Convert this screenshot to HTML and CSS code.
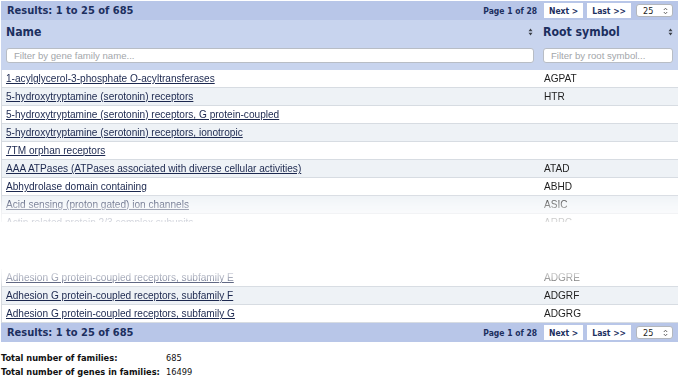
FILE: index.html
```html
<!DOCTYPE html>
<html>
<head>
<meta charset="utf-8">
<link rel="stylesheet" href="styles.css">
</head>
<body>
<div class="wrap">
  <div class="bar">
    <span class="results">Results: 1 to 25 of 685</span>
    <div class="pager">
      <span class="pageinfo">Page 1 of 28</span>
      <span class="btn">Next &gt;</span>
      <span class="btn">Last &gt;&gt;</span>
      <span class="select">25<svg class="updown" width="5" height="8" viewBox="0 0 5 8"><path d="M0.8 3 L2.5 1.2 L4.2 3 M0.8 5 L2.5 6.8 L4.2 5" fill="none" stroke="#555" stroke-width="0.9"/></svg></span>
    </div>
  </div>
  <div class="grid head">
    <div class="th">Name<svg class="sort" width="5" height="8" viewBox="0 0 5 8"><path d="M0.5 3.2 L2.5 0.6 L4.5 3.2 Z M0.5 4.8 L2.5 7.4 L4.5 4.8 Z" fill="#3a3f48"/></svg></div>
    <div class="th">Root symbol<svg class="sort" width="5" height="8" viewBox="0 0 5 8"><path d="M0.5 3.2 L2.5 0.6 L4.5 3.2 Z M0.5 4.8 L2.5 7.4 L4.5 4.8 Z" fill="#3a3f48"/></svg></div>
  </div>
  <div class="grid filters">
    <div class="fcell fname"><input class="filter" placeholder="Filter by gene family name..."></div>
    <div class="fcell fsym"><input class="filter" placeholder="Filter by root symbol..."></div>
  </div>
  <div class="rows rows-top">
    <div class="grid row"><div class="cell"><a href="#">1-acylglycerol-3-phosphate O-acyltransferases</a></div><div class="cell sym">AGPAT</div></div>
    <div class="grid row"><div class="cell"><a href="#">5-hydroxytryptamine (serotonin) receptors</a></div><div class="cell sym">HTR</div></div>
    <div class="grid row"><div class="cell"><a href="#">5-hydroxytryptamine (serotonin) receptors, G protein-coupled</a></div><div class="cell sym"></div></div>
    <div class="grid row"><div class="cell"><a href="#">5-hydroxytryptamine (serotonin) receptors, ionotropic</a></div><div class="cell sym"></div></div>
    <div class="grid row"><div class="cell"><a href="#">7TM orphan receptors</a></div><div class="cell sym"></div></div>
    <div class="grid row"><div class="cell"><a href="#">AAA ATPases (ATPases associated with diverse cellular activities)</a></div><div class="cell sym">ATAD</div></div>
    <div class="grid row"><div class="cell"><a href="#">Abhydrolase domain containing</a></div><div class="cell sym">ABHD</div></div>
    <div class="grid row"><div class="cell"><a href="#">Acid sensing (proton gated) ion channels</a></div><div class="cell sym">ASIC</div></div>
    <div class="grid row"><div class="cell"><a href="#">Actin related protein 2/3 complex subunits</a></div><div class="cell sym">ARPC</div></div>
  </div>
  <div class="gap"></div>
  <div class="rows rows-bottom">
    <div class="grid row"><div class="cell"><a href="#">Adhesion G protein-coupled receptors, subfamily E</a></div><div class="cell sym">ADGRE</div></div>
    <div class="grid row"><div class="cell"><a href="#">Adhesion G protein-coupled receptors, subfamily F</a></div><div class="cell sym">ADGRF</div></div>
    <div class="grid row"><div class="cell"><a href="#">Adhesion G protein-coupled receptors, subfamily G</a></div><div class="cell sym">ADGRG</div></div>
  </div>
  <div class="bar">
    <span class="results">Results: 1 to 25 of 685</span>
    <div class="pager">
      <span class="pageinfo">Page 1 of 28</span>
      <span class="btn">Next &gt;</span>
      <span class="btn">Last &gt;&gt;</span>
      <span class="select">25<svg class="updown" width="5" height="8" viewBox="0 0 5 8"><path d="M0.8 3 L2.5 1.2 L4.2 3 M0.8 5 L2.5 6.8 L4.2 5" fill="none" stroke="#555" stroke-width="0.9"/></svg></span>
    </div>
  </div>
</div>
<div class="totals">
  <span class="tl">Total number of families:</span><span class="tv">685</span>
  <span class="tl">Total number of genes in families:</span><span class="tv">16499</span>
</div>
</body>
</html>
```
FILE: styles.css
```css
body {
  margin: 0;
  background: #ffffff;
}

.wrap {
  margin: 1px 1px 0 1px;
}

.bar {
  height: 19px;
  background: #b8c6e8;
  display: flex;
  align-items: center;
  justify-content: space-between;
  padding: 0 5px 0 6px;
  font-family: "DejaVu Sans Condensed", "DejaVu Sans", sans-serif;
  font-stretch: condensed;
  font-weight: bold;
  color: #1c2f5f;
}

.results {
  font-size: 11px;
}

.pager {
  display: flex;
  align-items: center;
  gap: 4px;
  font-size: 8.5px;
}

.pageinfo {
  margin-right: 3px;
}

.btn {
  background: #ffffff;
  height: 15px;
  padding: 0 5px;
  display: flex;
  align-items: center;
}

.select {
  width: 37px;
  height: 13px;
  box-sizing: border-box;
  border: 1px solid #b3b7bd;
  border-radius: 3px;
  background: #ffffff;
  font-weight: normal;
  font-size: 9px;
  color: #222222;
  display: flex;
  align-items: center;
  justify-content: space-between;
  padding: 0 4px 0 6px;
  margin-left: 1px;
}

.grid {
  display: grid;
  grid-template-columns: 537px 1fr;
}

.head {
  height: 23px;
  background: #c8d4ee;
}

.th {
  display: flex;
  align-items: center;
  justify-content: space-between;
  padding: 0 5px;
  font-family: "DejaVu Sans Condensed", "DejaVu Sans", sans-serif;
  font-stretch: condensed;
  font-weight: bold;
  font-size: 12.2px;
  color: #1c2f5f;
}

.filters {
  height: 27px;
  background: #c8d4ee;
}

.fcell {
  padding-top: 5px;
}

.fname {
  padding-left: 5px;
  padding-right: 4px;
}

.fsym {
  padding-left: 5px;
  padding-right: 5px;
}

.filter {
  display: block;
  width: 100%;
  height: 15px;
  box-sizing: border-box;
  border: 1px solid #b8bdc5;
  border-radius: 3px;
  background: #ffffff;
  padding: 0 7px;
  margin: 0;
  font-family: "Liberation Sans", Arial, sans-serif;
  font-size: 9.6px;
  color: #333333;
  outline: none;
}

.filter::placeholder {
  color: #a3a6aa;
}

.rows {
  border-left: 1px solid #d4d8de;
}

.row {
  height: 18px;
  box-sizing: border-box;
  border-bottom: 1px solid #d7dce2;
  align-items: center;
  font-family: "Liberation Sans", Arial, sans-serif;
  font-size: 10.1px;
  background: #ffffff;
}

.row:nth-child(even) {
  background: #eef2f6;
}

.cell {
  padding-left: 4px;
  white-space: nowrap;
}

.cell a {
  color: #1c284f;
  text-decoration: underline;
}

.sym {
  padding-left: 5px;
  color: #1e1e1e;
}

.rows-top {
  height: 152px;
  overflow: hidden;
  -webkit-mask-image: linear-gradient(to bottom, #000 0, #000 124px, rgba(0,0,0,0.5) 136px, rgba(0,0,0,0.28) 146px, rgba(0,0,0,0.18) 152px);
  mask-image: linear-gradient(to bottom, #000 0, #000 124px, rgba(0,0,0,0.5) 136px, rgba(0,0,0,0.28) 146px, rgba(0,0,0,0.18) 152px);
}

.gap {
  height: 47px;
}

.rows-bottom {
  -webkit-mask-image: linear-gradient(to bottom, rgba(0,0,0,0.1) 0, rgba(0,0,0,0.4) 9px, #000 18px);
  mask-image: linear-gradient(to bottom, rgba(0,0,0,0.1) 0, rgba(0,0,0,0.4) 9px, #000 18px);
}

.totals {
  display: grid;
  grid-template-columns: 165px auto;
  margin-top: 9px;
  padding-left: 1px;
  font-family: "DejaVu Sans Condensed", "DejaVu Sans", sans-serif;
  font-stretch: condensed;
  font-size: 9.2px;
  line-height: 14px;
  color: #111111;
}

.tl {
  font-weight: bold;
}
```
